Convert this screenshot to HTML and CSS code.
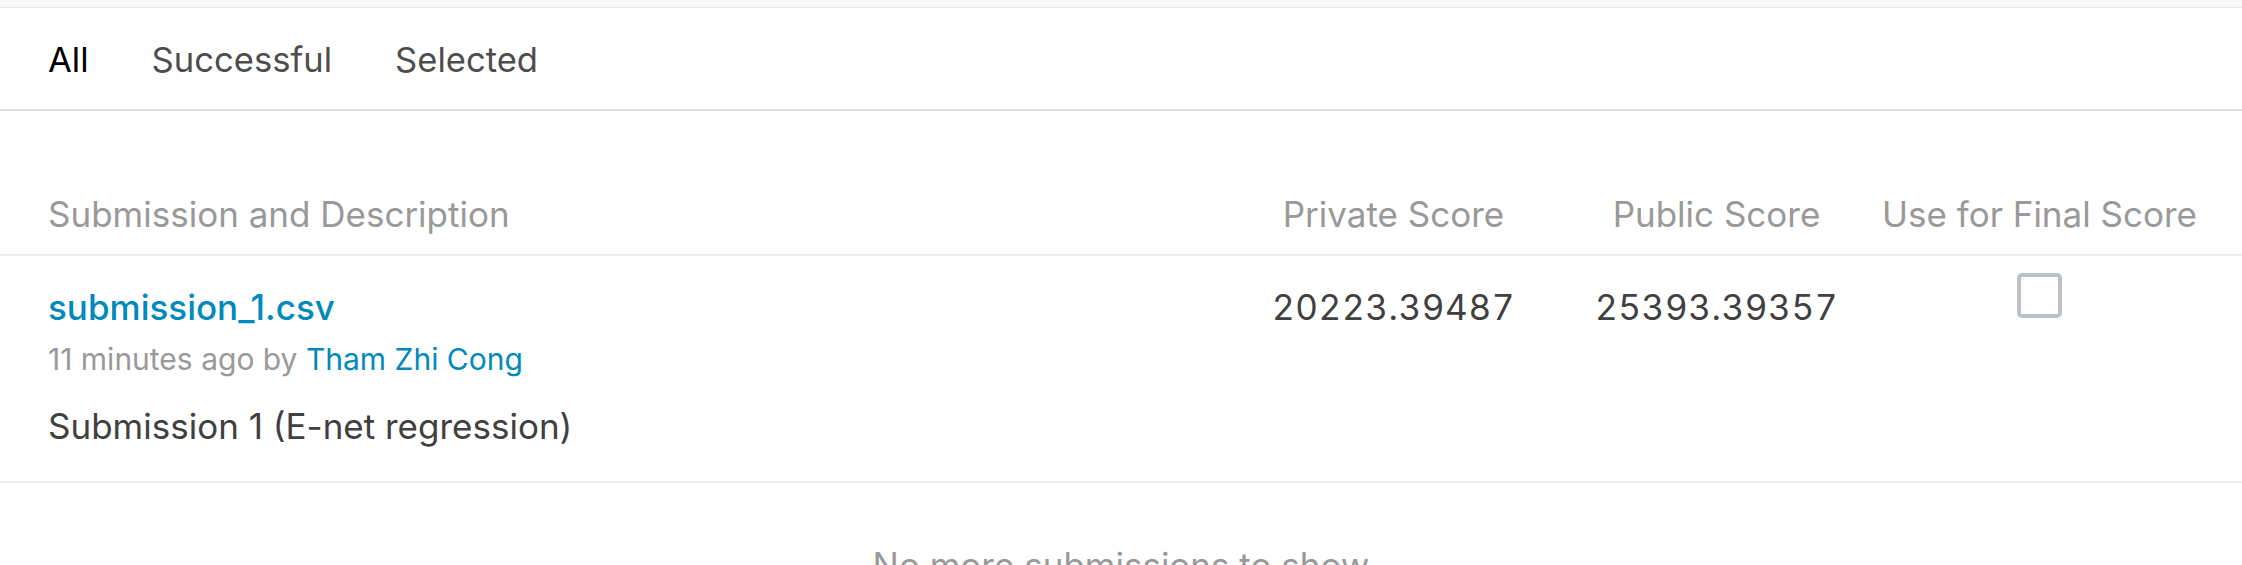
FILE: index.html
```html
<!DOCTYPE html>
<html lang="en">
<head>
<meta charset="utf-8">
<title>Submissions</title>
<link rel="stylesheet" href="styles.css">
</head>
<body>
<div class="topband"></div>
<nav class="tabs">
  <span class="tab tab-active">All</span>
  <span class="tab">Successful</span>
  <span class="tab">Selected</span>
</nav>
<section class="table">
  <div class="row head">
    <div class="cell">Submission and Description</div>
    <div class="cell center">Private Score</div>
    <div class="cell center">Public Score</div>
    <div class="cell center">Use for Final Score</div>
  </div>
  <div class="row body">
    <div class="cell desc">
      <a class="file" href="#">submission_1.csv</a>
      <div class="meta">11 minutes ago by <a class="user" href="#">Tham Zhi Cong</a></div>
      <div class="note">Submission 1 (E-net regression)</div>
    </div>
    <div class="cell center score">20223.39487</div>
    <div class="cell center score">25393.39357</div>
    <div class="cell center check"><span class="checkbox"></span></div>
  </div>
</section>
<p class="empty">No more submissions to show</p>
</body>
</html>
```
FILE: styles.css
```css
html, body {
  margin: 0;
  padding: 0;
  background: #ffffff;
  font-family: Inter, "Noto Sans", sans-serif;
  overflow: hidden;
}

.topband {
  height: 7px;
  background: #f8f8f8;
  border-bottom: 1px solid #e8e8e8;
}

.tabs {
  display: flex;
  align-items: center;
  height: 101px;
  padding-left: 48px;
  border-bottom: 2px solid #dcdcdc;
}

.tab {
  font-size: 34.6px;
  line-height: 40px;
  color: #4d4d4d;
  margin-right: 63px;
}

.tab-active {
  color: #000000;
}

.row {
  display: grid;
  grid-template-columns: 1fr 323px 323px 323px;
  padding-left: 48px;
  padding-right: 41px;
}

.head {
  padding-top: 83px;
  padding-bottom: 20px;
  border-bottom: 2px solid #ececec;
  font-size: 35px;
  line-height: 40px;
  color: #999999;
}

.center {
  text-align: center;
}

.body {
  padding-top: 31px;
  padding-bottom: 35px;
  border-bottom: 2px solid #ececec;
  font-size: 35px;
  line-height: 40px;
}

.file {
  display: block;
  color: #008abc;
  text-decoration: none;
  font-weight: 500;
}

.meta {
  margin-top: 12px;
  font-size: 30px;
  color: #999999;
}

.user {
  color: #008abc;
  text-decoration: none;
}

.note {
  margin-top: 27px;
  color: #404040;
}

.score {
  color: #404040;
  font-variant-numeric: tabular-nums;
  letter-spacing: 0.6px;
}

.check {
  display: flex;
  justify-content: center;
  align-items: flex-start;
}

.checkbox {
  display: block;
  width: 37px;
  height: 37px;
  margin-top: -14px;
  border: 4px solid #bdc1c6;
  border-radius: 5px;
}

.empty {
  margin: 62px 0 0;
  text-align: center;
  font-size: 35px;
  line-height: 40px;
  color: #999999;
}
```
